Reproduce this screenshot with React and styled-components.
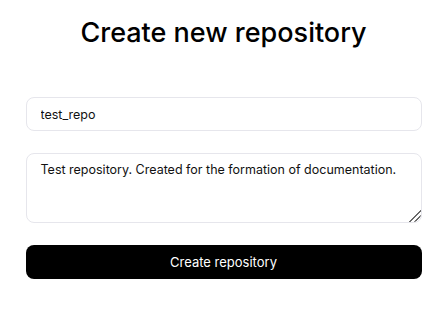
import React from 'react';
import styled, { createGlobalStyle } from 'styled-components';

const GlobalStyle = createGlobalStyle`
  body {
    margin: 0;
    background: #ffffff;
    font-family: Inter, "Noto Sans", sans-serif;
    color: #000000;
  }
`;

const Page = styled.main`
  width: 396px;
  margin: 0 auto;
  padding-top: 14px;
  display: flex;
  flex-direction: column;
`;

const Title = styled.h1`
  margin: 0 0 45px;
  text-align: center;
  font-size: 27px;
  line-height: 38px;
  font-weight: 500;
  letter-spacing: 0;
`;

const Form = styled.form`
  display: flex;
  flex-direction: column;
  gap: 22px;
`;

const fieldBase = `
  box-sizing: border-box;
  width: 100%;
  border: 1px solid #e6e6ec;
  border-radius: 8px;
  background: #ffffff;
  font-family: Inter, "Noto Sans", sans-serif;
  font-size: 12.5px;
  color: #111111;
  outline: none;
`;

const TextInput = styled.input`
  ${fieldBase}
  height: 34px;
  padding: 0 14px;
`;

const TextArea = styled.textarea`
  ${fieldBase}
  height: 70px;
  padding: 7px 12px 7px 14px;
  line-height: 18px;
  resize: vertical;

  &::-webkit-scrollbar {
    width: 14px;
    height: 14px;
    background: transparent;
  }

  &::-webkit-resizer {
    background:
      linear-gradient(to bottom right, #ffffff 52%, transparent 52%),
      repeating-linear-gradient(135deg, transparent 0 2.2px, #6a6a6a 2.2px 3.4px);
    border-bottom-right-radius: 8px;
  }
`;

const SubmitButton = styled.button`
  height: 34px;
  border: none;
  border-radius: 8px;
  background: #000000;
  color: #ffffff;
  font-family: Inter, "Noto Sans", sans-serif;
  font-size: 13px;
  cursor: pointer;
`;

export default function App() {
  return (
    <>
      <GlobalStyle />
      <Page>
        <Title>Create new repository</Title>
        <Form onSubmit={e => e.preventDefault()}>
          <TextInput defaultValue="test_repo" />
          <TextArea defaultValue="Test repository. Created for the formation of documentation." />
          <SubmitButton type="submit">Create repository</SubmitButton>
        </Form>
      </Page>
    </>
  );
}
